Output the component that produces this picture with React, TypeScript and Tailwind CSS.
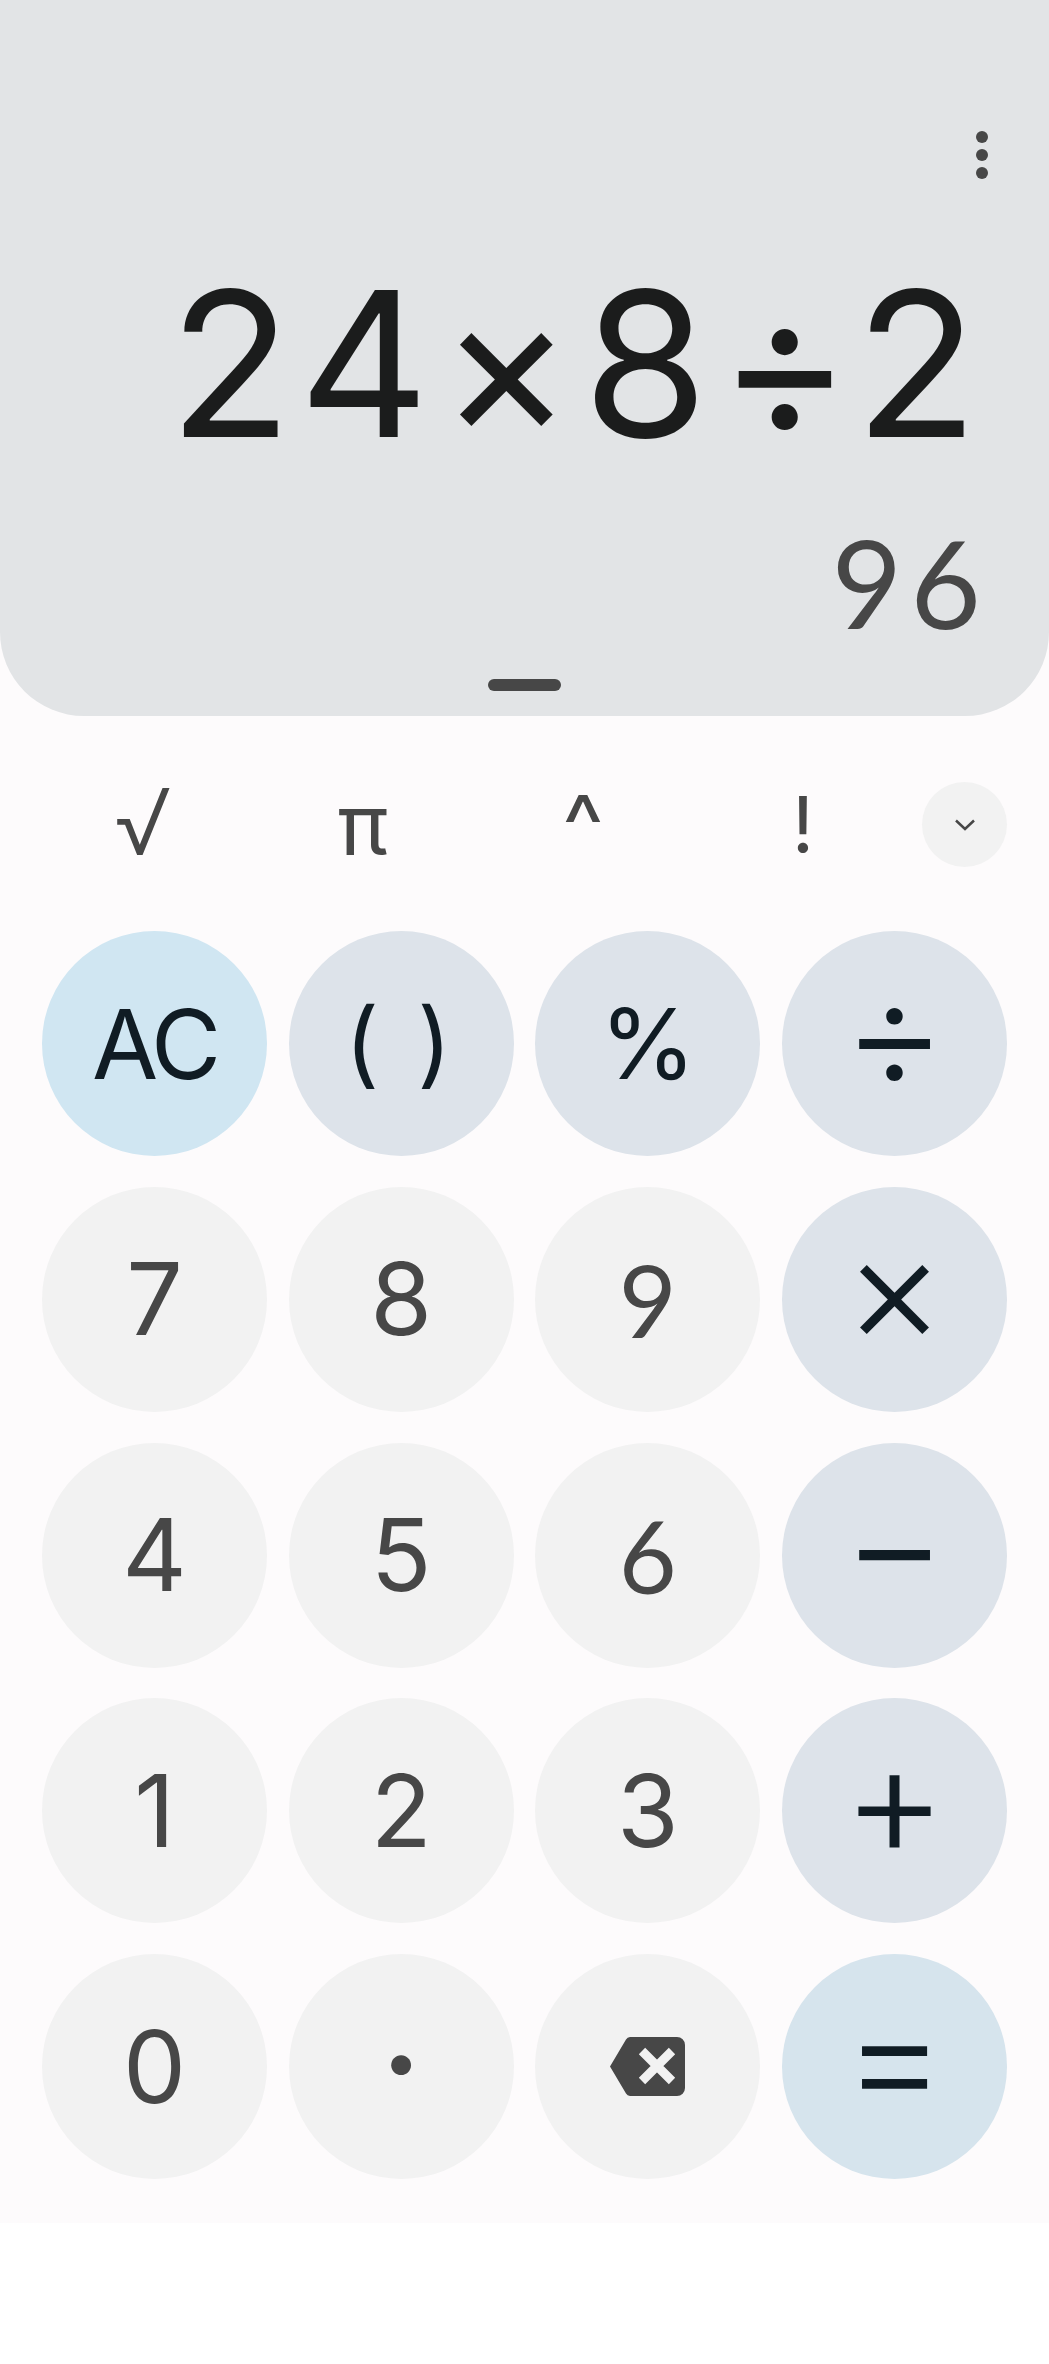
const lato = "font-['Lato','Liberation_Sans',sans-serif]"

type Key = { label: string; kind: "clear" | "op" | "num" | "equals"; size?: string; icon?: boolean }

const keys: Key[] = [
  { label: "AC", kind: "clear", size: "text-[96px] tracking-[-4px]" },
  { label: "( )", kind: "op", size: "text-[94px] tracking-[6px] pb-[4px]" },
  { label: "%", kind: "op", size: "text-[98px]" },
  { label: "÷", kind: "op", size: "text-[160px] font-light pb-[24px]" },
  { label: "7", kind: "num" },
  { label: "8", kind: "num" },
  { label: "9", kind: "num", size: `text-[100px] ${lato}` },
  { label: "×", kind: "op", size: "text-[155px] font-light pb-[24px]" },
  { label: "4", kind: "num" },
  { label: "5", kind: "num" },
  { label: "6", kind: "num", size: `text-[100px] ${lato}` },
  { label: "−", kind: "op", size: "text-[160px] font-light pb-[24px]" },
  { label: "1", kind: "num" },
  { label: "2", kind: "num" },
  { label: "3", kind: "num" },
  { label: "+", kind: "op", size: "text-[160px] font-light pb-[24px]" },
  { label: "0", kind: "num" },
  { label: "·", kind: "num", size: "text-[150px] pb-[8px]" },
  { label: "", kind: "num", icon: true },
  { label: "=", kind: "equals", size: "text-[160px] font-light pb-[24px]" },
]

const kindClass = {
  clear: "bg-[#d0e6f2] text-[#101c24]",
  op: "bg-[#dde3ea] text-[#101c24]",
  num: "bg-[#f2f2f2] text-[#474747]",
  equals: "bg-[#d6e4ed] text-[#101c24]",
}

const sciKeys = [
  { label: "√", size: "text-[92px] font-light pb-[6px]" },
  { label: "π", size: "text-[84px]" },
  { label: "^", size: "text-[88px]" },
  { label: "!", size: "text-[78px]" },
]

function BackspaceIcon() {
  return (
    <svg width="75" height="59" viewBox="0 0 75 59">
      <path
        d="M20 0H67a8 8 0 0 1 8 8V51a8 8 0 0 1-8 8H20a5 5 0 0 1-4-2.500L0 29.500L16 2.500A5 5 0 0 1 20 0Z"
        fill="#474747"
      />
      <path d="M32 14L62 44M62 14L32 44" stroke="#f2f2f2" strokeWidth="9" fill="none" />
    </svg>
  )
}

export default function App() {
  return (
    <div className="min-h-[2364px] w-[1049px] bg-white font-['Inter','Liberation_Sans',sans-serif]">
      <div className="bg-[#fdfbfc] pb-[44px]">
        {/* display */}
        <div className="flex h-[716px] flex-col items-end rounded-b-[84px] bg-[#e2e4e6]">
          <svg className="mt-[131px] mr-[61px]" width="12" height="48" viewBox="0 0 12 48">
            <circle cx="6" cy="6" r="6" fill="#474747" />
            <circle cx="6" cy="24" r="6" fill="#474747" />
            <circle cx="6" cy="42" r="6" fill="#474747" />
          </svg>
          <div className="mt-[65px] mr-[61px] whitespace-nowrap text-[202px] leading-[240px] tracking-[10px] text-[#1b1c1c]">
            24×8÷2
          </div>
          <div className={`mt-[26px] mr-[60px] text-[122px] leading-[145px] tracking-[8px] text-[#474747] ${lato}`}>96</div>
          <div className="mt-[24px] mr-[488px] h-[12px] w-[73px] rounded-full bg-[#474747]" />
        </div>

        {/* scientific row */}
        <div className="mt-[66px] flex h-[85px] items-center pl-[33px] text-[#474747]">
          {sciKeys.map((s) => (
            <div key={s.label} className={`flex w-[220px] justify-center leading-none ${s.size}`}>
              {s.label}
            </div>
          ))}
          <div className="ml-[9px] flex h-[85px] w-[85px] items-center justify-center rounded-full bg-[#f2f2f2]">
            <svg width="20" height="12" viewBox="0 0 20 12">
              <path d="M1 1.500L10 10L19 1.500" stroke="#474747" strokeWidth="2.500" fill="none" />
            </svg>
          </div>
        </div>

        {/* keypad */}
        <div className="mt-[64px] grid grid-cols-[repeat(4,225px)] gap-x-[21.67px] gap-y-[30.75px] px-[42px]">
          {keys.map((k, i) => (
            <div
              key={i}
              className={`flex h-[225px] w-[225px] items-center justify-center whitespace-pre rounded-full leading-none ${kindClass[k.kind]} ${k.size ?? "text-[100px]"}`}
            >
              {k.icon ? <BackspaceIcon /> : k.label}
            </div>
          ))}
        </div>
      </div>
    </div>
  )
}
